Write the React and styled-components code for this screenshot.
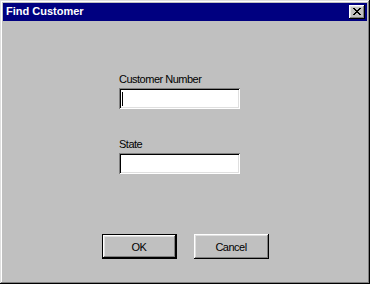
import React from "react";
import styled, { createGlobalStyle } from "styled-components";

const FACE = "#c0c0c0";
const SHADOW = "#808080";
const LIGHT = "#dfdfdf";

const GlobalStyle = createGlobalStyle`
  html, body {
    margin: 0;
    padding: 0;
    background: ${FACE};
  }
  body {
    font-family: "Liberation Sans", Arial, sans-serif;
    font-size: 11px;
    -webkit-font-smoothing: none;
  }
`;

function App() {
  return (
    <>
      <GlobalStyle />
      <Window>
        <TitleBar>
          <Title>Find Customer</Title>
          <CloseButton aria-label="Close">
            <CloseGlyph />
          </CloseButton>
        </TitleBar>

        <Body>
          <Form>
            <Field>
              <Label>Customer Number</Label>
              <TextBox>
                <Caret />
              </TextBox>
            </Field>
            <Field>
              <Label>State</Label>
              <TextBox />
            </Field>
          </Form>

          <ButtonRow>
            <PushButton isDefault>OK</PushButton>
            <PushButton>Cancel</PushButton>
          </ButtonRow>
        </Body>
      </Window>
    </>
  );
}

export default App;

function CloseGlyph() {
  // 8x7 pixel cross, row by row
  const rows = [
    [[0, 2], [6, 2]],
    [[1, 2], [5, 2]],
    [[2, 4]],
    [[3, 2]],
    [[2, 4]],
    [[1, 2], [5, 2]],
    [[0, 2], [6, 2]],
  ];
  return (
    <svg width="8" height="7" viewBox="0 0 8 7" shapeRendering="crispEdges">
      {rows.map((segs, y) =>
        segs.map(([x, w], i) => (
          <rect key={`${y}-${i}`} x={x} y={y} width={w} height={1} fill="#000" />
        ))
      )}
    </svg>
  );
}

const Window = styled.div`
  box-sizing: border-box;
  width: 370px;
  height: 284px;
  padding: 3px;
  background: ${FACE};
  box-shadow: inset -1px -1px #000, inset 1px 1px ${LIGHT},
    inset -2px -2px ${SHADOW}, inset 2px 2px #fff;
  display: flex;
  flex-direction: column;
`;

const TitleBar = styled.div`
  height: 18px;
  background: #000080;
  display: flex;
  align-items: center;
  justify-content: space-between;
  padding: 0 2px 0 3px;
`;

const Title = styled.span`
  color: #fff;
  font-weight: bold;
  font-size: 11px;
  line-height: 13px;
  margin-top: -1px;
`;

const CloseButton = styled.button`
  box-sizing: border-box;
  width: 16px;
  height: 14px;
  padding: 3px 0 0 4px;
  border: none;
  background: ${FACE};
  box-shadow: inset -1px -1px #000, inset 1px 1px #fff,
    inset -2px -2px ${SHADOW}, inset 2px 2px ${LIGHT};
  display: flex;
  align-items: flex-start;
  justify-content: flex-start;
`;

const Body = styled.div`
  flex: 1;
  display: flex;
  flex-direction: column;
  padding-top: 52px;
`;

const Form = styled.div`
  display: flex;
  flex-direction: column;
  gap: 29px;
  margin-left: 116px;
`;

const Field = styled.div`
  display: flex;
  flex-direction: column;
  gap: 2px;
`;

const Label = styled.span`
  font-size: 11px;
  line-height: 13px;
  letter-spacing: -0.5px;
  color: #000;
`;

const TextBox = styled.div`
  position: relative;
  box-sizing: border-box;
  width: 121px;
  height: 21px;
  background: #fff;
  box-shadow: inset 1px 1px ${SHADOW}, inset -1px -1px #fff,
    inset 2px 2px #000, inset -2px -2px ${LIGHT};
`;

const Caret = styled.span`
  position: absolute;
  left: 3px;
  top: 4px;
  width: 1px;
  height: 14px;
  background: #000;
`;

const ButtonRow = styled.div`
  display: flex;
  justify-content: center;
  gap: 17px;
  margin-top: 60px;
`;

const PushButton = styled.button`
  box-sizing: border-box;
  width: 75px;
  height: 25px;
  padding: 0;
  border: ${(p) => (p.isDefault ? "1px solid #000" : "none")};
  background: ${FACE};
  box-shadow: inset -1px -1px #000, inset 1px 1px #fff,
    inset -2px -2px ${SHADOW}, inset 2px 2px ${LIGHT};
  font-family: "Liberation Sans", Arial, sans-serif;
  font-size: 11px;
  letter-spacing: -0.5px;
  color: #000;
`;
